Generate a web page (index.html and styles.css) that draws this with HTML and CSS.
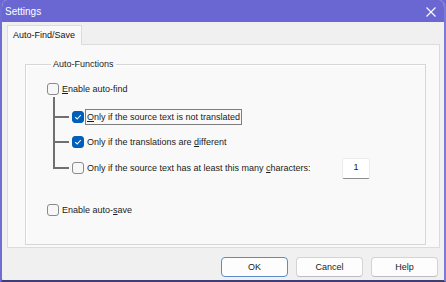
FILE: index.html
```html
<!DOCTYPE html>
<html lang="en">
<head>
    <meta charset="UTF-8">
    <meta name="viewport" content="width=device-width, initial-scale=1.0">
    <title>Settings</title>
    <link rel="stylesheet" href="styles.css">
</head>
<body>
    <div class="window">
        <!-- Title Bar -->
        <div class="titlebar">
            <span class="title">Settings</span>
            <span class="close">
                <svg width="10" height="10" viewBox="0 0 10 10"><path d="M0.5 0.5 L9.5 9.5 M9.5 0.5 L0.5 9.5" stroke="#ffffff" stroke-width="1.1" fill="none"/></svg>
            </span>
        </div>

        <!-- Tabs -->
        <div class="tabs">
            <div class="tab">Auto-Find/Save</div>
        </div>

        <!-- Tab Panel -->
        <div class="panel">
            <fieldset class="group">
                <legend>Auto-Functions</legend>
                <div class="row find-row">
                    <span class="box"></span>
                    <span class="label"><u>E</u>nable auto-find</span>
                </div>
                <div class="tree">
                    <div class="sub-row first">
                        <span class="branch"></span>
                        <span class="box checked">
                            <svg width="8" height="8" viewBox="0 0 8 8"><path d="M1.2 4.2 L3.2 6 L6.8 2" stroke="#ffffff" stroke-width="1.1" fill="none"/></svg>
                        </span>
                        <span class="label focused"><u>O</u>nly if the source text is not translated</span>
                    </div>
                    <div class="sub-row second">
                        <span class="branch"></span>
                        <span class="box checked">
                            <svg width="8" height="8" viewBox="0 0 8 8"><path d="M1.2 4.2 L3.2 6 L6.8 2" stroke="#ffffff" stroke-width="1.1" fill="none"/></svg>
                        </span>
                        <span class="label">Only if the translations are <u>d</u>ifferent</span>
                    </div>
                    <div class="sub-row last">
                        <span class="branch"></span>
                        <span class="box"></span>
                        <span class="label wide">Only if the source text has at least this many <u>c</u>haracters:</span>
                        <span class="number">1</span>
                    </div>
                </div>
                <div class="row save-row">
                    <span class="box"></span>
                    <span class="label">Enable auto-<u>s</u>ave</span>
                </div>
            </fieldset>
        </div>

        <!-- Buttons -->
        <div class="footer">
            <button class="btn default">OK</button>
            <button class="btn">Cancel</button>
            <button class="btn">Help</button>
        </div>
    </div>
</body>
</html>
```

FILE: styles.css
```css
body {
    margin: 0;
    font-family: "Liberation Sans", Arial, sans-serif;
    font-size: 9px;
    color: #1b1b1b;
    background-color: #6a67d3;
}
.window {
    box-sizing: border-box;
    width: 446px;
    height: 282px;
    display: flex;
    flex-direction: column;
    background-color: #f0f0f0;
    border-left: 2px solid #6f6cd4;
    border-right: 2px solid #7d7ad6;
    border-bottom: 2px solid #3f3d73;
    border-radius: 7px 7px 0 3px;
    overflow: hidden;
}
.titlebar {
    height: 22px;
    flex-shrink: 0;
    display: flex;
    align-items: center;
    justify-content: space-between;
    padding: 0 8px 0 3px;
    background-color: #6a67d3;
    color: white;
}
.title {
    font-size: 10px;
    margin-top: 1px;
}
.close {
    display: flex;
    margin-top: 1px;
}
.tabs {
    height: 22px;
    flex-shrink: 0;
    box-sizing: border-box;
    padding: 3px 0 0 5px;
    display: flex;
    align-items: flex-end;
}
.tab {
    position: relative;
    box-sizing: border-box;
    width: 75px;
    height: 20px;
    margin-bottom: -1px;
    padding: 4px 0 0 5px;
    background-color: #f9f9f9;
    border: 1px solid #dcdcdc;
    border-bottom: none;
    color: #111;
}
.panel {
    box-sizing: border-box;
    height: 204px;
    margin: 0 4px 0 5px;
    padding: 12px 13px 2px 17px;
    display: flex;
    flex-direction: column;
    background-color: #f9f9f9;
    border: 1px solid #dcdcdc;
}
.group {
    flex: 1;
    margin: 0;
    padding: 10px 0 0 21px;
    border: 1px solid #d6d6d6;
    box-shadow: inset 1px 1px 0 #ffffff;
}
.group legend {
    margin-left: 4px;
    padding: 0 2px;
    line-height: 14px;
}
.row {
    display: flex;
    align-items: center;
    height: 16px;
}
.save-row {
    margin-top: 20px;
}
.box {
    box-sizing: border-box;
    width: 12px;
    height: 12px;
    flex-shrink: 0;
    display: flex;
    align-items: center;
    justify-content: center;
    margin-right: 3px;
    background-color: #f7f7f7;
    border: 1px solid #8a8a8a;
    border-radius: 3px;
}
.box.checked {
    background-color: #005fb8;
    border-color: #005fb8;
}
.tree {
    margin-left: 6px;
    padding-top: 7px;
    background: linear-gradient(#707070, #707070) 0 0 / 2px 7px no-repeat;
}
.sub-row {
    display: flex;
    align-items: center;
    height: 25px;
}
.sub-row.last {
    height: 28px;
}
.branch {
    align-self: stretch;
    width: 16px;
    margin-right: 3px;
    background:
        linear-gradient(#707070, #707070) 0 0 / 2px 100% no-repeat,
        linear-gradient(#707070, #707070) 0 50% / 100% 2px no-repeat;
}
.last .branch {
    background:
        linear-gradient(#707070, #707070) 0 0 / 2px calc(50% + 1px) no-repeat,
        linear-gradient(#707070, #707070) 0 50% / 100% 2px no-repeat;
}
.label.focused {
    margin-left: -2px;
    padding: 2px 1px;
    border: 1px solid #7d7d7d;
}
.label.wide {
    width: 255px;
}
.number {
    box-sizing: border-box;
    width: 28px;
    height: 21px;
    padding-top: 3px;
    text-align: center;
    background-color: white;
    border: 1px solid #ececec;
    border-bottom: 1px solid #8d8d8d;
    border-radius: 2px;
}
.footer {
    flex: 1;
    display: flex;
    justify-content: flex-end;
    align-items: flex-start;
    gap: 8px;
    padding: 9px 6px 0 0;
}
.btn {
    width: 67px;
    height: 20px;
    padding: 0;
    font-family: inherit;
    font-size: 9px;
    color: #1b1b1b;
    background-color: #fdfdfd;
    border: 1px solid #d3d3d3;
    border-bottom-color: #bdbdbd;
    border-radius: 4px;
}
.btn.default {
    border-color: #5a8ccb;
}
```
